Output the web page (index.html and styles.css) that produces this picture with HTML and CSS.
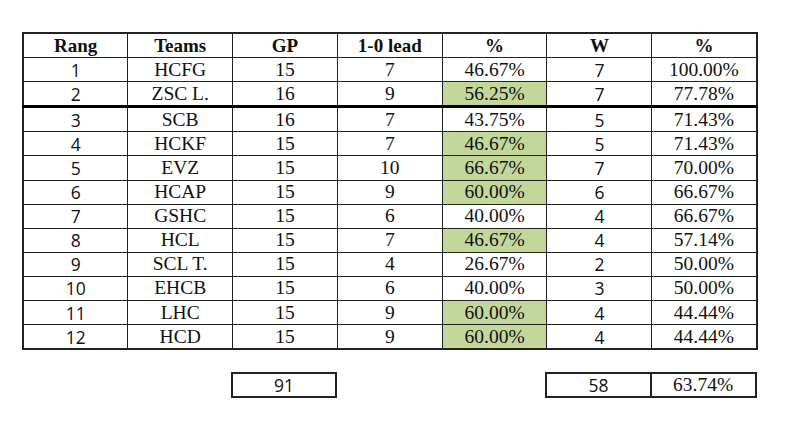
FILE: index.html
```html
<!DOCTYPE html>
<html>
<head>
<meta charset="utf-8">
<link rel="stylesheet" href="styles.css">
</head>
<body>
<div class="page">
<table class="stats">
  <colgroup><col><col><col><col><col><col><col></colgroup>
  <thead>
    <tr><th>Rang</th><th>Teams</th><th>GP</th><th>1-0 lead</th><th>%</th><th>W</th><th>%</th></tr>
  </thead>
  <tbody>
    <tr><td class="sans">1</td><td>HCFG</td><td>15</td><td>7</td><td>46.67%</td><td class="sans">7</td><td>100.00%</td></tr>
    <tr class="cut"><td class="sans">2</td><td>ZSC L.</td><td>16</td><td>9</td><td class="hl">56.25%</td><td class="sans">7</td><td>77.78%</td></tr>
    <tr><td class="sans">3</td><td>SCB</td><td>16</td><td>7</td><td>43.75%</td><td class="sans">5</td><td>71.43%</td></tr>
    <tr><td class="sans">4</td><td>HCKF</td><td>15</td><td>7</td><td class="hl">46.67%</td><td class="sans">5</td><td>71.43%</td></tr>
    <tr><td class="sans">5</td><td>EVZ</td><td>15</td><td>10</td><td class="hl">66.67%</td><td class="sans">7</td><td>70.00%</td></tr>
    <tr><td class="sans">6</td><td>HCAP</td><td>15</td><td>9</td><td class="hl">60.00%</td><td class="sans">6</td><td>66.67%</td></tr>
    <tr><td class="sans">7</td><td>GSHC</td><td>15</td><td>6</td><td>40.00%</td><td class="sans">4</td><td>66.67%</td></tr>
    <tr><td class="sans">8</td><td>HCL</td><td>15</td><td>7</td><td class="hl">46.67%</td><td class="sans">4</td><td>57.14%</td></tr>
    <tr><td class="sans">9</td><td>SCL T.</td><td>15</td><td>4</td><td>26.67%</td><td class="sans">2</td><td>50.00%</td></tr>
    <tr><td class="sans">10</td><td>EHCB</td><td>15</td><td>6</td><td>40.00%</td><td class="sans">3</td><td>50.00%</td></tr>
    <tr><td class="sans">11</td><td>LHC</td><td>15</td><td>9</td><td class="hl">60.00%</td><td class="sans">4</td><td>44.44%</td></tr>
    <tr><td class="sans">12</td><td>HCD</td><td>15</td><td>9</td><td class="hl">60.00%</td><td class="sans">4</td><td>44.44%</td></tr>
  </tbody>
</table>
<table class="totals">
  <colgroup><col><col><col><col><col><col><col></colgroup>
  <tr><td class="blank"></td><td class="blank"></td><td class="sans box">91</td><td class="blank"></td><td class="blank"></td><td class="sans box">58</td><td class="box">63.74%</td></tr>
</table>
</div>
</body>
</html>
```
FILE: styles.css
```css
html, body {
  margin: 0;
  padding: 0;
  background: #fff;
}
.page {
  padding: 32px 0 0 22px;
  color: #111;
}
table {
  border-collapse: collapse;
  table-layout: fixed;
  width: 734px;
}
col {
  width: 104.8px;
}
.stats {
  border: 2px solid #222;
}
th, td {
  border: 1.5px solid #222;
  padding: 0;
  height: 23.1px;
  text-align: center;
  vertical-align: middle;
  font-family: "Liberation Serif", "DejaVu Serif", serif;
  font-size: 19.5px;
  line-height: 20px;
}
th {
  font-weight: bold;
  font-size: 19px;
}
td.sans {
  font-family: "Open Sans", "Liberation Sans", sans-serif;
  font-size: 17.5px;
}
td.hl {
  background: #c4d79b;
}
.cut td {
  border-bottom: 3px solid #000;
}
.totals {
  margin-top: 22px;
}
.totals td.blank {
  border: none;
}
.totals td.box {
  border: 2px solid #222;
  height: 22px;
}
```
